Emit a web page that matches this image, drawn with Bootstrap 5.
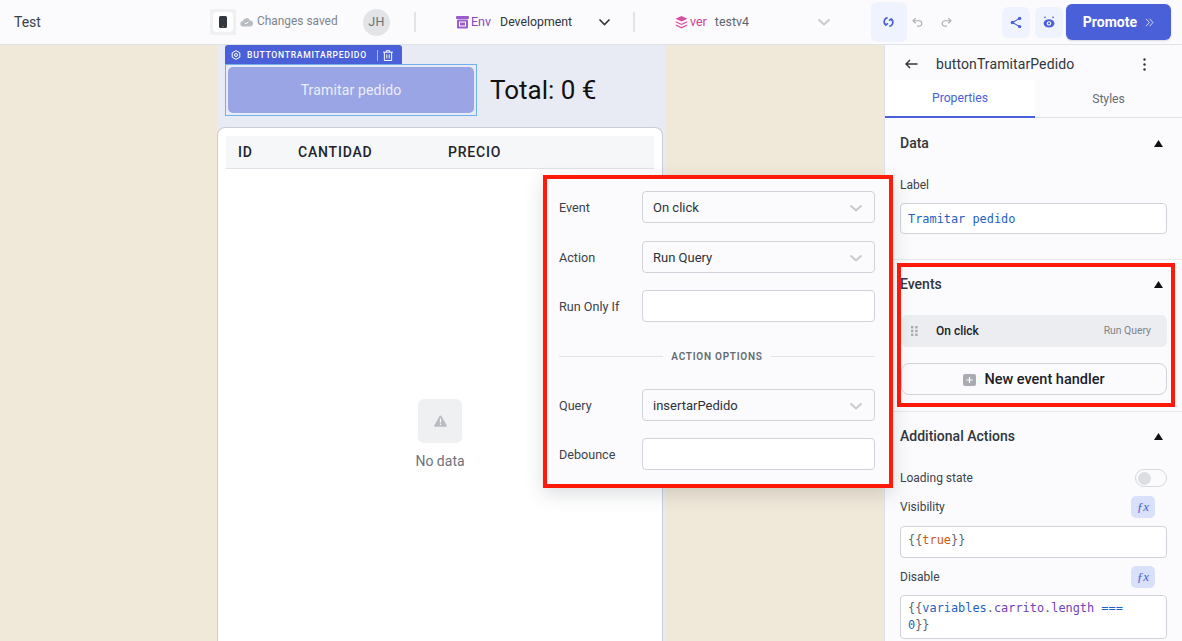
<!DOCTYPE html>
<html lang="en">
<head>
    <meta charset="UTF-8">
    <meta name="viewport" content="width=device-width, initial-scale=1.0">
    <title>Test</title>
    <link rel="stylesheet" href="https://cdn.jsdelivr.net/npm/bootstrap@5.3.3/dist/css/bootstrap.min.css">
    <script src="https://cdn.jsdelivr.net/npm/bootstrap@5.3.3/dist/js/bootstrap.bundle.min.js"></script>
    <style>
        html, body { height: 100%; overflow: hidden; }
        body { font-family: Roboto, "Liberation Sans", sans-serif; background: #f0e8d8; color: #2f353b; font-size: 12px; }

        /* top bar */
        .topbar { height: 45px; background: #fbfbfd; border-bottom: 1px solid #dfe3e8; }
        .top-title { width: 210px; padding-left: 14px; font-size: 14px; color: #3a4149; }
        .device-box { width: 26px; height: 26px; background: #eff0f3; border-radius: 2px; }
        .device-inner { width: 20px; height: 20px; background: #fff; border-radius: 4px; }
        .saved { width: 110px; padding-left: 4px; color: #7e848b; font-size: 11.9px; }
        .avatar { width: 27px; height: 27px; border-radius: 50%; background: #e2e4e7; color: #6c7278; font-size: 12.5px; letter-spacing: .3px; }
        .vline { width: 2px; height: 20px; background: #e1e3e7; }
        .env-text { color: #8a44bd; font-size: 12.5px; margin-left: 2px; }
        .ver-text { color: #d13b92; font-size: 12.5px; margin-left: 2px; }
        .env-value { color: #2f353b; font-size: 12.3px; margin-left: 9px; }
        .ver-value { color: #5d646b; font-size: 12.4px; margin-left: 8px; }
        .sync-box { width: 36px; height: 40px; background: #eff3fd; border-radius: 6px; }
        .tool-box { width: 28px; height: 31px; background: #eff3fd; border-radius: 6px; }
        .promote-btn { width: 105px; height: 36px; background: #4a60d8; color: #fff; border-radius: 6px; font-size: 14px; font-weight: 700; box-shadow: 0 1px 2px rgba(60,70,120,.2); }

        /* canvas */
        .main-area { height: 596px; }
        .canvas-area { width: 884px; padding-left: 217px; }
        .app-page { width: 448px; background: #e8ebf3; height: 100%; overflow: hidden; }
        .comp-top { height: 82px; padding-left: 8px; }
        .comp-tag { width: 177px; height: 19px; background: #4a60d8; color: #fff; border-radius: 3px 3px 0 0; padding: 1px 0 0 6px; font-size: 8.6px; font-weight: 500; letter-spacing: .72px; }
        .comp-sep { width: 1px; height: 11px; background: #a9b4ee; margin: 0 5px 0 10px; }
        .comp-frame { width: 252px; height: 52px; border: 1px solid #6fb0f0; padding: 2px; }
        .comp-btn { height: 46px; background: #9aa5e6; color: #eceefb; border-radius: 5px; font-size: 14px; letter-spacing: .15px; }
        .total-text { font-size: 26px; color: #111; margin-left: 13px; line-height: 52px; }
        .data-card { width: 446px; height: 514px; background: #fff; border: 1px solid #c9cdd4; border-bottom: 0; border-radius: 8px 8px 0 0; padding: 8px 8px 0; }
        .data-head { height: 33px; background: #f6f7f9; border-bottom: 1px solid #dfe2e7; font-size: 14px; font-weight: 500; letter-spacing: .8px; color: #1f2429; padding-left: 12px; }
        .cell-id { width: 60px; }
        .cell-qty { width: 150px; }
        .empty-state { padding-top: 230px; }
        .empty-icon { width: 44px; height: 44px; background: #eff0f2; border-radius: 6px; }
        .empty-text { color: #6d7379; font-size: 14px; margin-top: 8px; }

        /* event popover */
        .event-pop { position: absolute; left: 543px; top: 175px; width: 350px; height: 313px; background: #fbfbfd; border: 4px solid #ff1a0a; padding: 12px 14px 0 12px; box-shadow: 0 6px 18px rgba(40,50,70,.16); z-index: 5; }
        .pop-row { height: 32px; }
        .pop-label { width: 83px; font-size: 12.6px; color: #3c4249; padding-top: 2px; }
        .field-box { width: 233px; height: 32px; border: 1px solid #cfd3d9; border-radius: 4px; background: #fff; }
        .field-select { background: #fbfbfd; padding: 1px 11px 0 10px; font-size: 13px; color: #2a3138; }
        .pop-divider { height: 1px; background: #dfe2e6; }
        .pop-divider-text { font-size: 10px; font-weight: 600; letter-spacing: .75px; color: #656b72; padding: 0 8px; white-space: nowrap; }

        /* right panel */
        .side-panel { width: 298px; background: #fbfbfd; border-left: 1px solid #dfe3e8; }
        .panel-head { height: 35px; padding: 3px 36px 0 20px; }
        .panel-name { font-size: 14px; color: #30363c; margin-left: 18px; letter-spacing: .1px; }
        .tab-strip { height: 38px; border-bottom: 1px solid #dfe3e8; }
        .tab-item { font-size: 12.2px; color: #666c73; padding-top: 1px; }
        .tab-item.is-active { background: #fff; color: #4a60d8; border-bottom: 2px solid #4a60d8; margin-bottom: -1px; width: 150px; }
        .prop-section { padding: 0 15px; border-bottom: 1px solid #e6e8ec; }
        .sec-title { font-size: 14px; font-weight: 500; color: #30363c; }
        .prop-label { font-size: 12px; color: #3c4249; }
        .code-box { background: #fff; border: 1px solid #cfd3d9; border-radius: 4px; font-family: "DejaVu Sans Mono", "Liberation Mono", monospace; font-size: 11.9px; line-height: 17px; padding: 6px 7px; }
        .events-wrap { height: 152px; padding: 3px 0 0 15px; }
        .events-frame { margin: 0 7px 0 -3px; border: 4px solid #ff1a0a; height: 144px; }
        .events-title { padding-top: 10px; height: 24px; margin: 0 8px 0 -1px; }
        .event-row { height: 32px; background: #ecedf1; border-radius: 6px; margin: 24px 4px 0 0; padding: 0 16px 0 10px; }
        .event-name { font-size: 12px; font-weight: 500; color: #1c2126; margin-left: 17px; }
        .event-kind { font-size: 10.4px; color: #7c8288; margin-left: auto; }
        .new-event { height: 32px; border: 1px solid #cfd3d9; border-radius: 8px; margin: 16px 4px 0 0; padding-top: 1px; font-size: 14.5px; font-weight: 500; color: #1c2126; }
        .toggle-off { width: 32px; height: 18px; border: 1px solid #d5d8dd; border-radius: 9px; padding-left: 2px; background: #fbfbfd; }
        .toggle-dot { width: 13px; height: 13px; border-radius: 50%; background: #dcdee2; }
        .fx-chip { width: 24px; height: 22px; margin-right: 12px; background: #d9e1fa; border-radius: 5px; color: #4a60d8; font-family: "Liberation Serif", serif; font-style: italic; font-size: 13px; }
        .tk-str { color: #1f5fc4; }
        .tk-kw { color: #d4570b; }
        .tk-prop { color: #6f42b8; }
        .tk-brace { color: #5c636a; }
    </style>
</head>
<body>
    <header class="topbar d-flex align-items-center">
        <div class="top-title">Test</div>
        <div class="device-box d-flex align-items-center justify-content-center">
            <div class="device-inner d-flex align-items-center justify-content-center">
                <svg width="8" height="12" viewBox="0 0 8 12"><rect width="8" height="12" rx="1.5" fill="#33383e"/><circle cx="4" cy="10.4" r=".6" fill="#999"/></svg>
            </div>
        </div>
        <svg class="ms-1" width="13" height="10" viewBox="0 0 13 10"><path d="M3.2 9.5a2.7 2.7 0 0 1-.4-5.4A3.8 3.8 0 0 1 10 3.4a3 3 0 0 1 0 6.1z" fill="#b9bdc3"/><path d="M4.6 5.6l1.4 1.4 2.4-2.4" fill="none" stroke="#fff" stroke-width="1"/></svg>
        <div class="saved">Changes saved</div>
        <div class="avatar d-flex align-items-center justify-content-center">JH</div>
        <div class="vline" style="margin-left:24px"></div>
        <svg style="margin-left:40px" width="13" height="13" viewBox="0 0 13 13"><rect y="0" width="13" height="3" rx="1" fill="#9a5cc9"/><rect x="1" y="3.6" width="11" height="8.9" rx="1.2" fill="#9a5cc9"/><rect x="3.5" y="6" width="6" height="4" fill="none" stroke="#fff" stroke-width="1"/></svg>
        <span class="env-text">Env</span>
        <span class="env-value">Development</span>
        <svg style="margin-left:26px" width="13" height="8" viewBox="0 0 13 8"><path d="M1.5 1.5l5 5 5-5" fill="none" stroke="#2f353b" stroke-width="1.6"/></svg>
        <div class="vline" style="margin-left:22px"></div>
        <svg style="margin-left:40px" width="13" height="13" viewBox="0 0 13 13" fill="#d84f9f"><path d="M6.5 0l6 2.8-6 2.8-6-2.8z"/><path d="M.8 5.2l5.7 2.6 5.7-2.6v1.3l-5.7 2.6L.8 6.5z"/><path d="M.8 8.4L6.5 11l5.7-2.6v1.3L6.5 12.6.8 9.7z"/></svg>
        <span class="ver-text">ver</span>
        <span class="ver-value">testv4</span>
        <svg style="margin-left:68px" width="14" height="8" viewBox="0 0 14 8"><path d="M1.5 1.5l5.5 5 5.5-5" fill="none" stroke="#c6c9ce" stroke-width="2"/></svg>
        <div class="sync-box d-flex align-items-center justify-content-center" style="margin-left:40px">
            <svg width="11" height="12" viewBox="0 0 11 12" fill="none" stroke="#4a60d8" stroke-width="1.6"><path d="M4.6 1.6A4 4 0 0 0 2.6 8.6"/><path d="M1 6.6l1.8 2.6 2.2-1.8"/><path d="M6.4 10.4a4 4 0 0 0 2-7"/><path d="M10 5.4L8.2 2.8 6 4.6"/></svg>
        </div>
        <svg style="margin-left:5px" width="11" height="10" viewBox="0 0 13 11" fill="none" stroke="#a9adb3" stroke-width="1.3"><path d="M4.4 1L1.2 4l3.2 3"/><path d="M1.4 4h7a3.2 3.2 0 0 1 0 6.4H6"/></svg>
        <svg style="margin-left:18px" width="11" height="10" viewBox="0 0 13 11" fill="none" stroke="#a9adb3" stroke-width="1.3"><path d="M8.6 1l3.2 3-3.2 3"/><path d="M11.6 4h-7a3.2 3.2 0 0 0 0 6.4H7"/></svg>
        <div class="tool-box d-flex align-items-center justify-content-center" style="margin-left:50px">
            <svg width="12" height="13" viewBox="0 0 12 13" fill="#4a60d8" stroke="#4a60d8"><circle cx="2.4" cy="6.5" r="1.7" stroke="none"/><circle cx="9.6" cy="2.4" r="1.7" stroke="none"/><circle cx="9.6" cy="10.6" r="1.7" stroke="none"/><path d="M2.4 6.5L9.6 2.4M2.4 6.5l7.2 4.1" stroke-width="1.1" fill="none"/></svg>
        </div>
        <div class="tool-box d-flex align-items-center justify-content-center" style="margin-left:5px">
            <svg width="12" height="12" viewBox="0 0 12 12"><ellipse cx="6" cy="7.4" rx="5.4" ry="4.2" fill="#4a60d8"/><circle cx="6" cy="7.4" r="2.2" fill="#fff"/><circle cx="6" cy="7.4" r="1.1" fill="#4a60d8"/><circle cx="2" cy="1.4" r=".8" fill="#4a60d8"/><circle cx="10" cy="1.4" r=".8" fill="#4a60d8"/></svg>
        </div>
        <div class="promote-btn d-flex align-items-center justify-content-center" style="margin-left:3px">
            Promote
            <svg class="ms-2" width="9" height="9" viewBox="0 0 9 9" fill="none" stroke="#d5dbf8" stroke-width="1"><path d="M1 .8l3.4 3.7L1 8.2"/><path d="M4.6 .8L8 4.5 4.6 8.2"/></svg>
        </div>
    </header>

    <div class="main-area d-flex">
        <section class="canvas-area">
            <div class="app-page">
                <div class="comp-top d-flex flex-column">
                    <div class="comp-tag d-flex align-items-center">
                        <svg style="margin-right:6px" width="10" height="10" viewBox="0 0 10 10" fill="none" stroke="#fff" stroke-width="1"><path d="M5 .6l3.8 2.2v4.4L5 9.4 1.2 7.2V2.8z"/><circle cx="5" cy="5" r="1.5"/></svg>
                        <span>BUTTONTRAMITARPEDIDO</span>
                        <span class="comp-sep"></span>
                        <svg width="10" height="11" viewBox="0 0 9 10" fill="none" stroke="#fff" stroke-width=".9"><path d="M0 2h9M3 2V.6h3V2M1.2 2v7.5h6.6V2M3.4 4v3.6M5.6 4v3.6"/></svg>
                    </div>
                    <div class="d-flex">
                        <div class="comp-frame">
                            <div class="comp-btn d-flex align-items-center justify-content-center">Tramitar pedido</div>
                        </div>
                        <div class="total-text">Total: 0 €</div>
                    </div>
                </div>
                <div class="data-card">
                    <div class="data-head d-flex align-items-center">
                        <div class="cell-id">ID</div>
                        <div class="cell-qty">CANTIDAD</div>
                        <div>PRECIO</div>
                    </div>
                    <div class="empty-state d-flex flex-column align-items-center">
                        <div class="empty-icon d-flex align-items-center justify-content-center">
                            <svg width="13" height="12" viewBox="0 0 13 12"><path d="M6.5.4a1 1 0 0 1 .9.5l5.3 9.4a1 1 0 0 1-.9 1.4H1.2a1 1 0 0 1-.9-1.4L5.6.9a1 1 0 0 1 .9-.5z" fill="#b9bdc3"/><path d="M6.5 3.6v3.8" stroke="#fff" stroke-width="1.2"/><circle cx="6.5" cy="9.2" r=".7" fill="#fff"/></svg>
                        </div>
                        <div class="empty-text">No data</div>
                    </div>
                </div>
            </div>
        </section>

        <aside class="side-panel">
            <div class="panel-head d-flex align-items-center">
                <svg width="13" height="10" viewBox="0 0 13 10" fill="none" stroke="#30363c" stroke-width="1.4"><path d="M12.5 5H1.2M5 1L1 5l4 4"/></svg>
                <div class="panel-name flex-grow-1">buttonTramitarPedido</div>
                <svg width="3" height="13" viewBox="0 0 3 13" fill="#30363c"><circle cx="1.5" cy="1.5" r="1.2"/><circle cx="1.5" cy="6.5" r="1.2"/><circle cx="1.5" cy="11.5" r="1.2"/></svg>
            </div>
            <div class="tab-strip d-flex">
                <div class="tab-item is-active d-flex align-items-center justify-content-center">Properties</div>
                <div class="tab-item flex-grow-1 d-flex align-items-center justify-content-center">Styles</div>
            </div>

            <div class="prop-section" style="height:142px">
                <div class="d-flex align-items-center justify-content-between" style="padding-top:15px">
                    <span class="sec-title">Data</span>
                    <svg class="me-1" width="9" height="7" viewBox="0 0 9 7"><path d="M4.5 0L9 7H0z" fill="#111"/></svg>
                </div>
                <div class="prop-label" style="margin-top:22px">Label</div>
                <div class="code-box tk-str" style="margin-top:9px;height:31px;padding-top:7px">Tramitar pedido</div>
            </div>

            <div class="prop-section events-wrap">
                <div class="events-frame d-flex flex-column">
                    <div class="events-title d-flex align-items-center justify-content-between">
                        <span class="sec-title">Events</span>
                        <svg width="9" height="7" viewBox="0 0 9 7"><path d="M4.5 0L9 7H0z" fill="#111"/></svg>
                    </div>
                    <div class="event-row d-flex align-items-center">
                        <svg width="8" height="10" viewBox="0 0 8 10" fill="#a7abb2"><rect width="2.4" height="2.4"/><rect x="4.2" width="2.4" height="2.4"/><rect y="3.8" width="2.4" height="2.4"/><rect x="4.2" y="3.8" width="2.4" height="2.4"/><rect y="7.6" width="2.4" height="2.4"/><rect x="4.2" y="7.6" width="2.4" height="2.4"/></svg>
                        <span class="event-name">On click</span>
                        <span class="event-kind">Run Query</span>
                    </div>
                    <div class="new-event d-flex align-items-center justify-content-center">
                        <svg class="me-2" width="13" height="12" viewBox="0 0 13 12"><rect width="13" height="12" rx="2" fill="#a9adb3"/><path d="M6.5 3v6M3.5 6h6" stroke="#fff" stroke-width="1.2"/></svg>
                        New event handler
                    </div>
                </div>
            </div>

            <div class="prop-section" style="border:0">
                <div class="d-flex align-items-center justify-content-between" style="padding-top:14px">
                    <span class="sec-title">Additional Actions</span>
                    <svg class="me-1" width="9" height="7" viewBox="0 0 9 7"><path d="M4.5 0L9 7H0z" fill="#111"/></svg>
                </div>
                <div class="d-flex align-items-center justify-content-between" style="margin-top:22px;height:18px">
                    <span class="prop-label">Loading state</span>
                    <div class="toggle-off d-flex align-items-center"><div class="toggle-dot"></div></div>
                </div>
                <div class="d-flex align-items-center justify-content-between" style="margin-top:9px;height:22px">
                    <span class="prop-label">Visibility</span>
                    <div class="fx-chip d-flex align-items-center justify-content-center">ƒx</div>
                </div>
                <div class="code-box" style="margin-top:8px;height:32px;padding-top:5px"><span class="tk-brace">{{</span><span class="tk-kw">true</span><span class="tk-brace">}}</span></div>
                <div class="d-flex align-items-center justify-content-between" style="margin-top:8px;height:22px">
                    <span class="prop-label">Disable</span>
                    <div class="fx-chip d-flex align-items-center justify-content-center">ƒx</div>
                </div>
                <div class="code-box" style="margin-top:7px;height:44px;padding-top:4px"><span class="tk-brace">{{</span><span class="tk-str">variables</span><span class="tk-brace">.</span><span class="tk-prop">carrito</span><span class="tk-brace">.</span><span class="tk-prop">length</span> <span class="tk-str">===</span><br><span class="tk-str">0</span><span class="tk-brace">}}</span></div>
            </div>
        </aside>
    </div>

    <div class="event-pop">
        <div class="pop-row d-flex align-items-center">
            <div class="pop-label">Event</div>
            <div class="field-box field-select d-flex align-items-center justify-content-between">On click<svg width="14" height="8" viewBox="0 0 14 8"><path d="M1.5 1.5l5.5 5 5.5-5" fill="none" stroke="#c6c9ce" stroke-width="2"/></svg></div>
        </div>
        <div class="pop-row d-flex align-items-center" style="margin-top:18px">
            <div class="pop-label">Action</div>
            <div class="field-box field-select d-flex align-items-center justify-content-between">Run Query<svg width="14" height="8" viewBox="0 0 14 8"><path d="M1.5 1.5l5.5 5 5.5-5" fill="none" stroke="#c6c9ce" stroke-width="2"/></svg></div>
        </div>
        <div class="pop-row d-flex align-items-center" style="margin-top:17px">
            <div class="pop-label">Run Only If</div>
            <div class="field-box"></div>
        </div>
        <div class="d-flex align-items-center" style="margin-top:27px;height:14px">
            <div class="pop-divider flex-grow-1"></div>
            <div class="pop-divider-text">ACTION OPTIONS</div>
            <div class="pop-divider flex-grow-1"></div>
        </div>
        <div class="pop-row d-flex align-items-center" style="margin-top:26px">
            <div class="pop-label">Query</div>
            <div class="field-box field-select d-flex align-items-center justify-content-between">insertarPedido<svg width="14" height="8" viewBox="0 0 14 8"><path d="M1.5 1.5l5.5 5 5.5-5" fill="none" stroke="#c6c9ce" stroke-width="2"/></svg></div>
        </div>
        <div class="pop-row d-flex align-items-center" style="margin-top:17px">
            <div class="pop-label">Debounce</div>
            <div class="field-box"></div>
        </div>
    </div>
</body>
</html>
